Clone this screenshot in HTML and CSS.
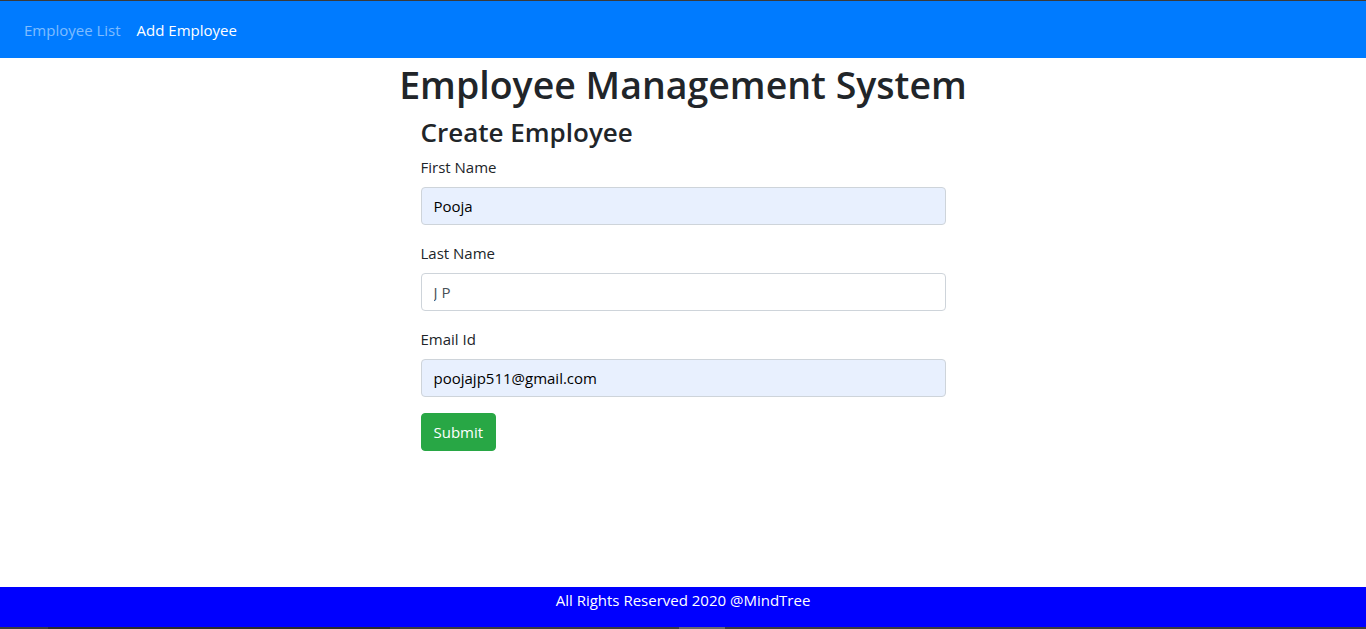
FILE: index.html
```html
<!DOCTYPE html>
<html lang="en">
<head>
<meta charset="utf-8">
<title>Employee Management System</title>
<link rel="stylesheet" href="styles.css">
</head>
<body>
<div class="page">
  <nav class="navbar">
    <a class="nav-link muted" href="#">Employee List</a>
    <a class="nav-link active" href="#">Add Employee</a>
  </nav>
  <main class="main">
    <h1 class="title">Employee Management System</h1>
    <div class="form-wrap">
      <h3 class="subtitle">Create Employee</h3>
      <form class="form">
        <div class="form-group">
          <label class="label">First Name</label>
          <input class="input autofill" type="text" value="Pooja">
        </div>
        <div class="form-group">
          <label class="label">Last Name</label>
          <input class="input plain" type="text" value="J P">
        </div>
        <div class="form-group">
          <label class="label">Email Id</label>
          <input class="input autofill" type="text" value="poojajp511@gmail.com">
        </div>
        <button class="btn" type="button">Submit</button>
      </form>
    </div>
  </main>
  <footer class="footer">All Rights Reserved 2020 @MindTree</footer>
  <div class="taskbar"><span class="seg1"></span><span class="seg2"></span></div>
</div>
</body>
</html>
```
FILE: styles.css
```css
* { box-sizing: border-box; }
html, body { margin: 0; padding: 0; height: 100%; }
body {
  font-family: "Open Sans", "Noto Sans", sans-serif;
  font-size: 15px;
  line-height: 24px;
  color: #212529;
  background: #fff;
}
.page {
  height: 629px;
  display: flex;
  flex-direction: column;
  border-top: 1px solid #3a3a3a;
}
.navbar {
  background: #007bff;
  height: 57px;
  display: flex;
  align-items: center;
  padding: 0 16px;
}
.nav-link {
  text-decoration: none;
  padding: 0 8px;
}
.nav-link.muted { color: rgba(255,255,255,.5); }
.nav-link.active { color: #fff; }
.main { flex: 1; }
.title {
  margin: 0 0 7px;
  padding-top: 3px;
  text-align: center;
  font-size: 37.5px;
  font-weight: 600;
  line-height: 48px;
}
.form-wrap { width: 525px; margin: 0 auto; }
.subtitle {
  margin: 0 0 7px;
  font-size: 26px;
  font-weight: 600;
  line-height: 32px;
}
.form-group { margin-bottom: 16px; }
.label { display: block; margin-bottom: 8px; }
.input {
  display: block;
  width: 100%;
  height: 38px;
  padding: 6px 12px;
  font: inherit;
  border: 1px solid #ced4da;
  border-radius: 4px;
  color: #000;
}
.input.autofill { background: #e8f0fe; }
.input.plain { background: #fff; color: #495057; }
.btn {
  font: inherit;
  color: #fff;
  background: #28a745;
  border: 1px solid #28a745;
  border-radius: 4px;
  height: 38px;
  padding: 6px 12px;
}
.footer {
  background: #0000ff;
  color: #fff;
  text-align: center;
  height: 40px;
  line-height: 24px;
  padding-top: 1px;
}
.taskbar {
  height: 2px;
  background: #3c3c3c;
  position: relative;
}
.seg1 { position: absolute; left: 48px; width: 342px; top: 0; height: 2px; background: #2b2b2b; }
.seg2 { position: absolute; left: 679px; width: 46px; top: 0; height: 2px; background: #6a6a6a; }
```
